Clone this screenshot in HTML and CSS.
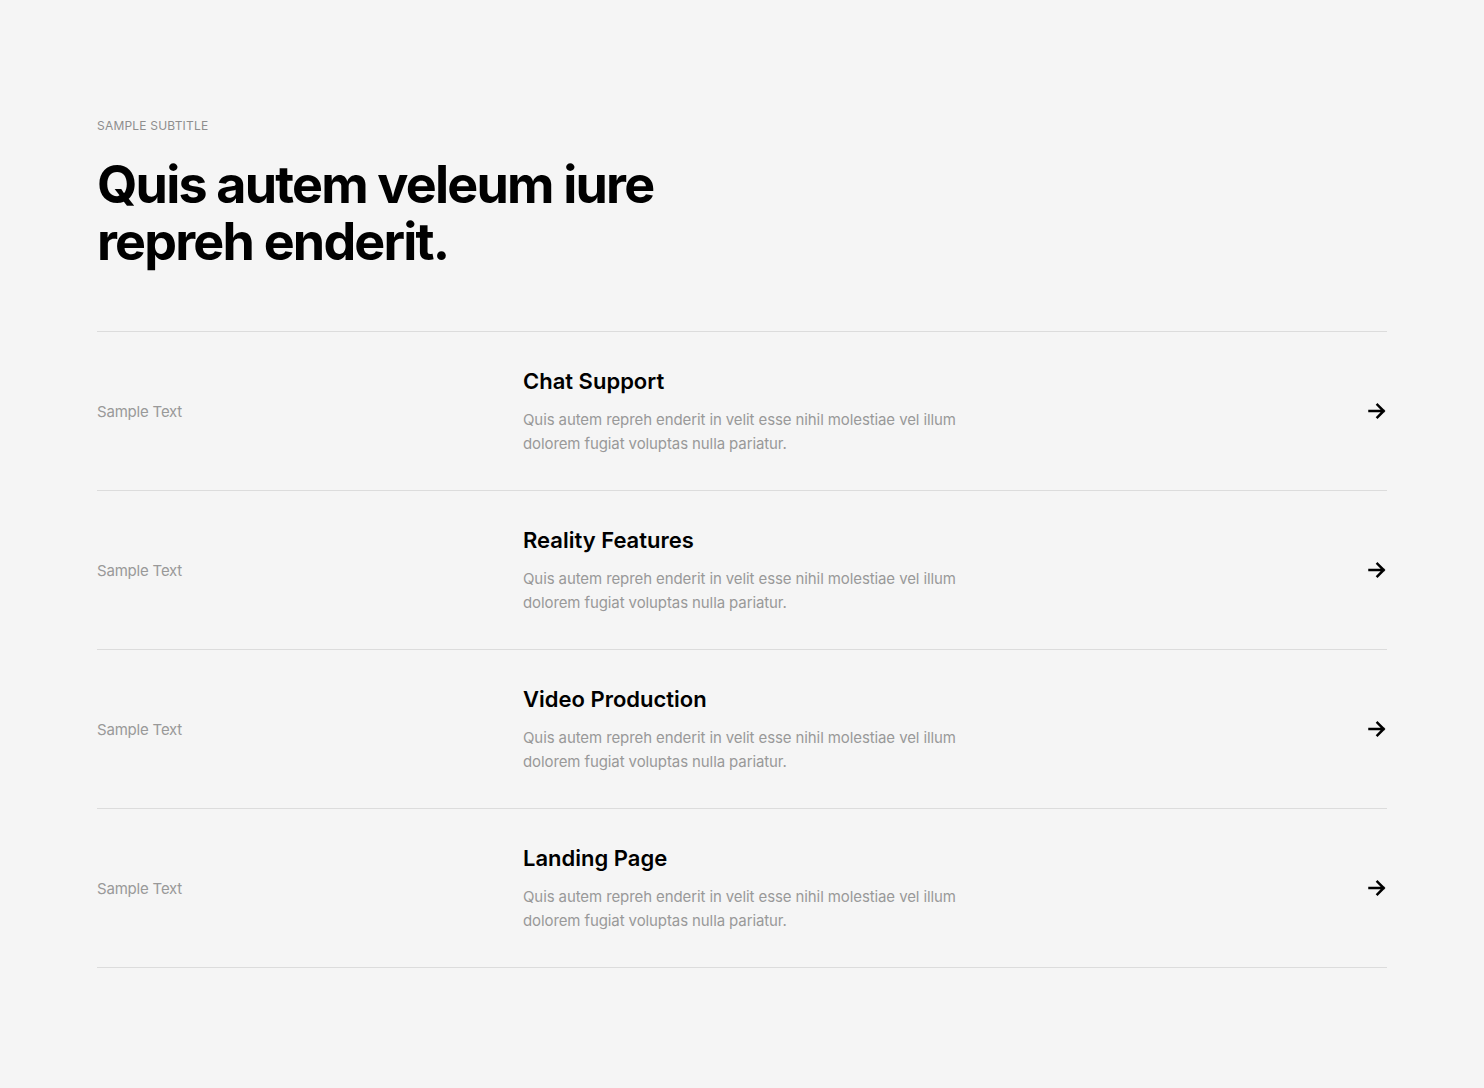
FILE: index.html
```html
<!DOCTYPE html>
<html lang="en">
<head>
<meta charset="utf-8">
<title>Services</title>
<link rel="stylesheet" href="styles.css">
</head>
<body>
<section class="section">
  <div class="container">
    <p class="subtitle">Sample Subtitle</p>
    <h1 class="headline">Quis autem veleum iure<br>repreh enderit.</h1>
    <ul class="list">
      <li class="row">
        <span class="label">Sample Text</span>
        <div class="body">
          <h3 class="title">Chat Support</h3>
          <p class="desc">Quis autem repreh enderit in velit esse nihil molestiae vel illum dolorem fugiat voluptas nulla pariatur.</p>
        </div>
        <svg class="arrow" viewBox="0 0 20 20" width="20" height="20"><path d="M2.5 10H16.5M10.5 3.8L16.7 10L10.5 16.2" fill="none" stroke="#000" stroke-width="2.5" stroke-linecap="square"/></svg>
      </li>
      <li class="row">
        <span class="label">Sample Text</span>
        <div class="body">
          <h3 class="title">Reality Features</h3>
          <p class="desc">Quis autem repreh enderit in velit esse nihil molestiae vel illum dolorem fugiat voluptas nulla pariatur.</p>
        </div>
        <svg class="arrow" viewBox="0 0 20 20" width="20" height="20"><path d="M2.5 10H16.5M10.5 3.8L16.7 10L10.5 16.2" fill="none" stroke="#000" stroke-width="2.5" stroke-linecap="square"/></svg>
      </li>
      <li class="row">
        <span class="label">Sample Text</span>
        <div class="body">
          <h3 class="title">Video Production</h3>
          <p class="desc">Quis autem repreh enderit in velit esse nihil molestiae vel illum dolorem fugiat voluptas nulla pariatur.</p>
        </div>
        <svg class="arrow" viewBox="0 0 20 20" width="20" height="20"><path d="M2.5 10H16.5M10.5 3.8L16.7 10L10.5 16.2" fill="none" stroke="#000" stroke-width="2.5" stroke-linecap="square"/></svg>
      </li>
      <li class="row">
        <span class="label">Sample Text</span>
        <div class="body">
          <h3 class="title">Landing Page</h3>
          <p class="desc">Quis autem repreh enderit in velit esse nihil molestiae vel illum dolorem fugiat voluptas nulla pariatur.</p>
        </div>
        <svg class="arrow" viewBox="0 0 20 20" width="20" height="20"><path d="M2.5 10H16.5M10.5 3.8L16.7 10L10.5 16.2" fill="none" stroke="#000" stroke-width="2.5" stroke-linecap="square"/></svg>
      </li>
    </ul>
  </div>
</section>
</body>
</html>
```

FILE: styles.css
```css
* { box-sizing: border-box; }
html, body { margin: 0; padding: 0; }
body {
  background: #f5f5f5;
  font-family: Inter, "Noto Sans", sans-serif;
  color: #000;
}
.section { padding: 118px 0 120px; }
.container { width: 1290px; margin: 0 auto; }
.subtitle {
  margin: 0;
  font-size: 12px;
  line-height: 16px;
  text-transform: uppercase;
  color: #8e8e8e;
  letter-spacing: 0.2px;
}
.headline {
  margin: 22px 0 0;
  font-size: 52px;
  line-height: 57px;
  font-weight: 700;
  letter-spacing: -1.8px;
}
.list {
  list-style: none;
  margin: 61px 0 0;
  padding: 0;
  border-top: 1px solid #dcdcdc;
}
.row {
  display: grid;
  grid-template-columns: 426px 1fr 20px;
  align-items: center;
  padding: 34px 0 34px;
  border-bottom: 1px solid #dcdcdc;
}
.label {
  font-size: 15px;
  color: #999;
  letter-spacing: -0.2px;
}
.title {
  margin: 0;
  font-size: 22px;
  line-height: 30px;
  font-weight: 600;
  letter-spacing: 0;
}
.desc {
  margin: 12px 0 0;
  max-width: 450px;
  font-size: 15px;
  line-height: 24px;
  color: #999;
  letter-spacing: -0.1px;
}
.arrow { display: block; }
```
